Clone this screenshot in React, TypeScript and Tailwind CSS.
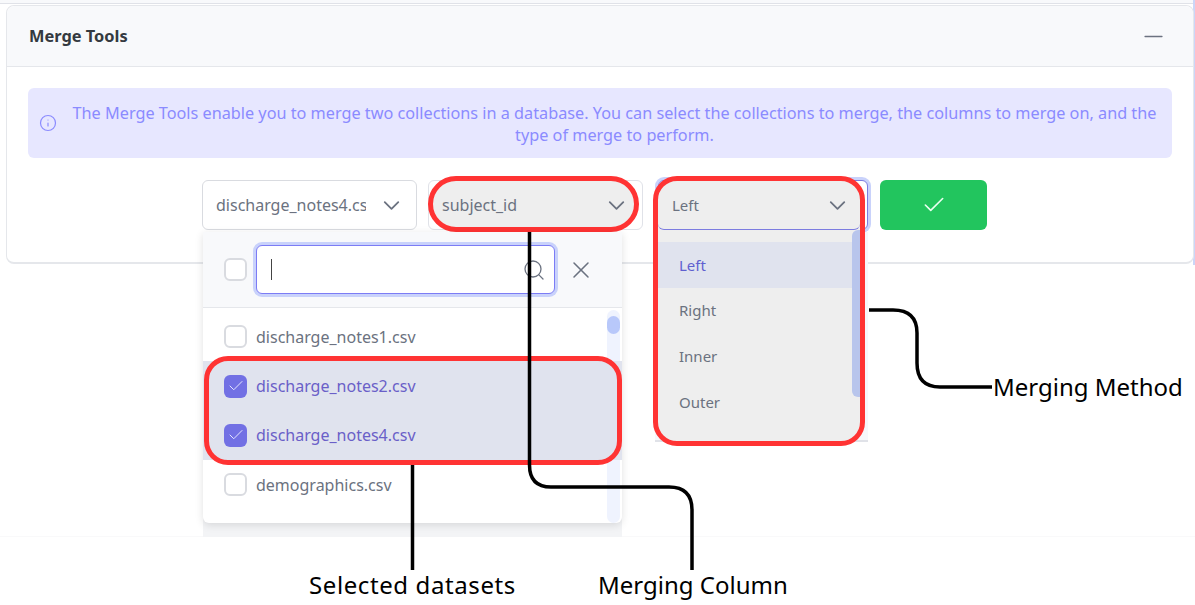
import { Check, ChevronDown, Info, Minus, Search, X } from "lucide-react";

const files = [
  { name: "discharge_notes1.csv", on: false },
  { name: "discharge_notes2.csv", on: true },
  { name: "discharge_notes4.csv", on: true },
  { name: "demographics.csv", on: false },
];

const methods = ["Left", "Right", "Inner", "Outer"];

function Box({ on }: { on: boolean }) {
  return on ? (
    <span className="flex h-[23px] w-[23px] shrink-0 items-center justify-center rounded-[6px] bg-[#7270e4] text-[#e8e8ff]">
      <Check size={18} strokeWidth={1.3} />
    </span>
  ) : (
    <span className="h-[23px] w-[23px] shrink-0 rounded-[6px] border-2 border-[#d9dbe0] bg-white" />
  );
}

function Chevron() {
  return <ChevronDown size={27} strokeWidth={1.6} className="ml-auto shrink-0" />;
}

export default function App() {
  return (
    <div className="relative h-[605px] w-[1195px] overflow-hidden bg-white font-['Noto_Sans',sans-serif] text-[16px] text-[#6b7280]">
      <div className="h-[4px] border-b border-[#e0e2e8] bg-[#f8f9fb]" />
      <div className="absolute right-0 top-0 h-[265px] w-[2px] bg-[#cbd6f8]" />

      <div className="relative ml-[6px] mr-[1px] mt-[1px] h-[259px] rounded-lg border border-[#e5e7eb] border-b-2 bg-white">
        <div className="flex h-[61px] items-center justify-between rounded-t-lg border-b border-[#e5e7eb] bg-[#f8f9fb] pl-[22px] pr-[25px]">
          <span className="text-[16.4px] font-bold text-[#343a40]">Merge Tools</span>
          <Minus size={29} strokeWidth={1.1} className="text-[#6b7280]" />
        </div>

        <div className="mx-[21px] mt-[21px] flex h-[70px] items-center rounded-md bg-[#e7e7ff] pl-[11px] pr-[13px] text-[#8b8bff]">
          <Info size={18} strokeWidth={1.6} className="mr-[13px] shrink-0" />
          <p className="flex-1 pt-[1px] text-center text-[16.24px] leading-[22px]">
            The Merge Tools enable you to merge two collections in a database. You can select the collections to merge, the columns to merge on, and the type of merge to perform.
          </p>
        </div>

        <div className="ml-[195px] mt-[22px] flex h-[50px] items-stretch">
          <div className="flex w-[215px] items-center rounded-md border border-[#d9dbe0] bg-white pl-[13px] pr-[11px]">
            <span className="w-[150px] overflow-hidden whitespace-nowrap">discharge_notes4.csv</span>
            <Chevron />
          </div>

          <div className="relative isolate ml-[11px] flex w-[215px] items-center rounded-md border border-[#e0e2e8] bg-white pl-[13px] pr-[12px]">
            <div className="absolute -bottom-[3px] -left-[1px] -top-[5px] -z-10 w-[211px] rounded-[28px] border-[5px] border-[#ff3333] bg-[#eeeeee]" />
            <span>subject_id</span>
            <Chevron />
          </div>

          <div className="ml-[15px] w-[210px] rounded-md border border-[#7c7ce0] bg-white ring-[3px] ring-[#c9d2fb]" />

          <button className="ml-[12px] flex w-[107px] items-center justify-center rounded-md bg-[#22c55e] text-[#eafff1]">
            <Check size={26} strokeWidth={1.5} />
          </button>
        </div>
      </div>

      {/* faint remnant below the first dropdown */}
      <div className="absolute left-0 top-[536px] h-px w-[1195px] bg-[#f9f9fa]" />
      <div className="absolute left-[203px] top-[232px] h-[305px] w-[419px] bg-[#f3f4f6]" />

      {/* collection multi-select panel */}
      <div className="absolute left-[203px] top-[232px] flex h-[291px] w-[419px] flex-col overflow-hidden rounded-b-md bg-white shadow-[0_2px_8px_rgba(0,0,0,0.12)]">
        <div className="flex h-[76px] shrink-0 items-center border-b border-[#e5e7eb] bg-[#f8f9fb] pl-[21px]">
          <Box on={false} />
          <div className="ml-[9px] flex h-[49px] w-[299px] shrink-0 items-center justify-between rounded-md border border-[#7c7cf5] bg-white pl-[14px] pr-[8px] ring-[3px] ring-[#c9d2fb]">
            <span className="h-[21px] w-px bg-[#444]" />
            <Search size={24} strokeWidth={1.3} />
          </div>
          <X size={28} strokeWidth={1.3} className="ml-[12px] shrink-0" />
        </div>
        <div className="relative flex-1">
          <div className="absolute bottom-0 right-[2px] top-[2px] w-[13px] rounded-full bg-[#eff3fe]">
            <div className="mt-[6px] h-[18px] w-[13px] rounded-full bg-[#b8c8fa]" />
          </div>
          <div className="relative flex flex-col pt-[4px]">
            {files.map((f) => (
              <div key={f.name} className={`flex h-[49.4px] items-center gap-[9px] pl-[21px] ${f.on ? "bg-[#e0e3ee] text-[#6a5fc8]" : ""}`}>
                <Box on={f.on} />
                <span>{f.name}</span>
              </div>
            ))}
          </div>
        </div>
      </div>

      {/* merge-method list */}
      <div className="absolute left-[655px] top-[232px] h-[210px] w-[213px] border-b-2 border-[#e0e2e8] bg-[#f6f7fb]" />
      <div className="absolute left-[653px] top-[176px] flex h-[270px] w-[212px] flex-col overflow-hidden rounded-[24px] border-[5px] border-[#ff3333] bg-[#eeeeee] text-[15px]">
        <div className="flex h-[49px] shrink-0 items-center rounded-b-md border-b border-[#7c7ce0] pl-[14px] pr-[9px]">
          <span>Left</span>
          <Chevron />
        </div>
        <div className="relative flex-1 pt-[12px]">
          {methods.map((m, i) => (
            <div key={m} className={`flex h-[45.8px] items-center pl-[21px] pr-[8px] ${i === 0 ? "bg-[#e0e3ee] text-[#5f5fd0]" : ""}`}>
              {m}
            </div>
          ))}
          <div className="absolute right-0 top-0 h-[167px] w-[8px] rounded-l-md bg-[#b8c5ec]" />
        </div>
      </div>

      {/* callouts */}
      <div className="absolute left-[204px] top-[356px] h-[109px] w-[418px] rounded-[24px] border-[5px] border-[#ff3333]" />
      <svg className="absolute left-0 top-0 h-[605px] w-[1195px]" viewBox="0 0 1195 605" fill="none" stroke="#000" strokeWidth="3.5">
        <path d="M529.5 232V465Q529.5 487 551 487H669Q692 487 692 510V570" />
        <path d="M412.5 465V570" />
        <path d="M869 310H893Q917 310 917 333V363Q917 387 940 387H992" />
      </svg>
      <span className="absolute left-[309px] top-[568px] whitespace-nowrap text-[24px] leading-[33px] tracking-[0.6px] text-black">Selected datasets</span>
      <span className="absolute left-[598px] top-[568px] whitespace-nowrap text-[24px] leading-[33px] text-black">Merging Column</span>
      <span className="absolute left-[993px] top-[370px] whitespace-nowrap text-[24px] leading-[33px] text-black">Merging Method</span>
    </div>
  );
}
